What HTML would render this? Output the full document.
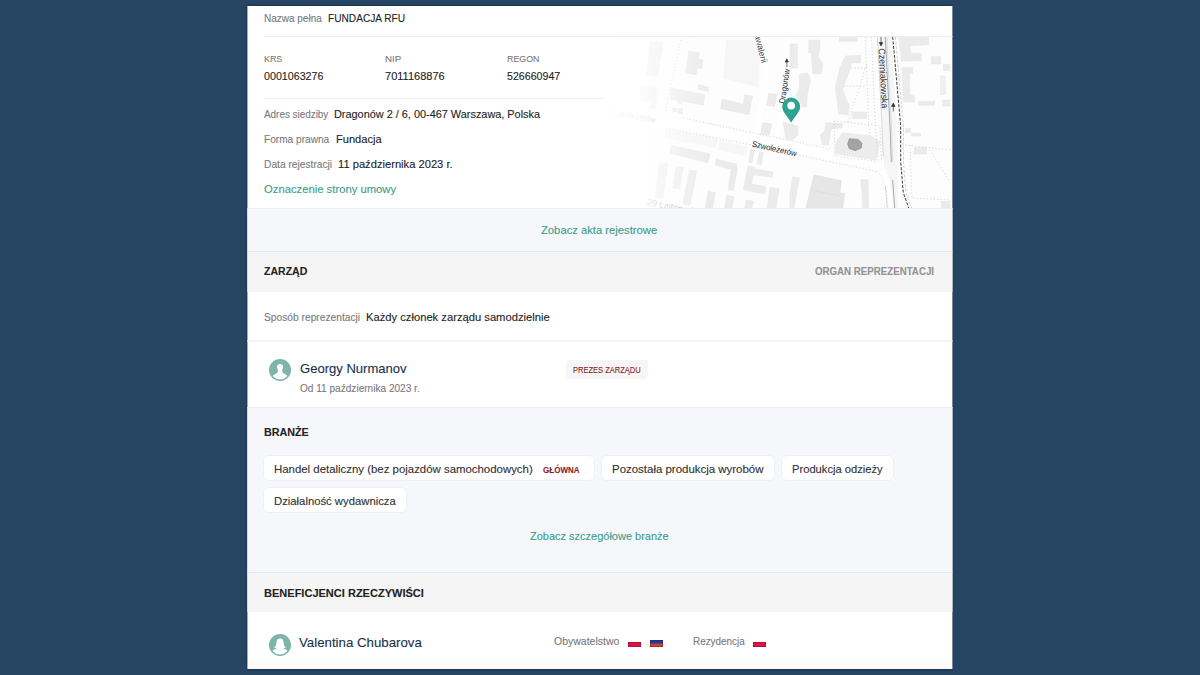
<!DOCTYPE html>
<html lang="pl"><head><meta charset="utf-8"><title>FUNDACJA RFU</title>
<style>
html,body{margin:0;padding:0}
body{width:1200px;height:675px;overflow:hidden;background:#264563;position:relative;font-family:"Liberation Sans",sans-serif}
.card{position:absolute;left:247px;top:6px;width:705px;height:663px;background:#fff;box-shadow:0 0 3px rgba(0,10,30,.55);overflow:hidden}
.abs{position:absolute}
.t{position:absolute;white-space:nowrap;line-height:1;transform-origin:0 0;-webkit-text-stroke:.1px currentColor}
.blue{background:#f5f7fa}
.hdr{background:#f5f5f5}
.chip{position:absolute;background:#fff;border:1px solid #eef0f3;border-radius:6px;box-sizing:border-box;height:26px;top:455px}
.fl{box-shadow:inset 0 0 0 .6px rgba(70,0,40,.45)}
.line{position:absolute;background:#ededed;height:1px}
</style></head><body>
<div class="abs" style="left:0;top:0;width:1200px;height:675px;transform:translateX(.4px)">
<div class="card"></div>
<!-- sections (page coords) -->
<div class="abs blue" style="left:247px;top:207.5px;width:705px;height:44px;border-top:1px solid #eceef0;border-bottom:1px solid #e6e8eb;box-sizing:border-box"></div>
<div class="abs hdr" style="left:247px;top:251.5px;width:705px;height:40.5px"></div>
<div class="abs" style="left:247px;top:340px;width:705px;height:2px;background:#f5f5f5"></div>
<div class="abs blue" style="left:247px;top:406.5px;width:705px;height:166.5px;border-top:1px solid #eceef0;border-bottom:1px solid #e6e8eb;box-sizing:border-box"></div>
<div class="abs hdr" style="left:247px;top:573px;width:705px;height:39px"></div>
<div class="line" style="left:264px;top:36px;width:688px"></div>
</div>
<svg class="abs" style="left:600px;top:37px" width="352" height="170.5" viewBox="600 37 352 170.5">
<defs>
<linearGradient id="fade" x1="0" y1="0" x2="1" y2="0"><stop offset="0" stop-color="#fff" stop-opacity="1"/><stop offset="0.4" stop-color="#fff" stop-opacity=".8"/><stop offset="1" stop-color="#fff" stop-opacity="0"/></linearGradient>
</defs>
<rect x="600" y="37" width="352" height="171" fill="#fdfdfd"/>
<!-- land-use areas -->
<g fill="#f6f6f6">
<polygon points="726,40 755.3,40 760.7,49.3 758,86.7 723.3,78.7"/>
<polygon points="666,128 718,139 716,148 664,138"/>
<polygon points="720,141 748,147 746,156 718,150"/>
</g>
<!-- roads (white bands) -->
<g fill="none" stroke="#fff" stroke-linecap="round">
<path d="M600,112 L700,129 L790,146 L878,164" stroke-width="10"/>
<path d="M757,37 C764,50 766,70 764,90 L756,140" stroke-width="6"/>
<path d="M789,37 L783,100 L776,142" stroke-width="5"/>
<path d="M884.5,37 L890,126 L893,208" stroke-width="17"/>
<path d="M884.6,37 L889.4,126 L891.5,208" stroke-width="14" stroke="#f6f6f6" stroke-linecap="butt"/>
<path d="M878,164 C884,172 888,185 889,208" stroke-width="8"/>
</g>
<!-- church grounds -->
<polygon points="842.7,134 870,136.7 878.7,142 875.3,158.7 836,152.7 837.3,143.3" fill="#ececec" stroke="#ececec" stroke-width="3" stroke-linejoin="round"/>
<!-- buildings -->
<g fill="#ebebeb" stroke="#e3e3e3" stroke-width=".4">
<polygon points="650,41.3 663.3,42.7 657.5,76 645.3,75.3 648,62"/>
<polygon points="688.7,51.3 699.3,52.7 698.7,59.3 702.7,60 702,68.7 697.3,68 696,74.7 685.3,72.7"/>
<polygon points="641.3,86 657.3,87.3 655.3,108.7 650,108 650.7,101.3 639.3,100"/>
<polygon points="671.3,88 704.7,94.7 703.3,105.3 682.7,101.3 681.3,104 676.7,103.3 677.3,100.7 670,99.3"/>
<polygon points="698.7,84.7 708.7,87.3 708,91.3 698,89.3"/>
<polygon points="722,99.3 743.3,104 744.7,94.7 752.7,96 748.7,114.7 720.7,108.7"/>
<rect x="672.7" y="108" width="4" height="4"/><rect x="678" y="108.7" width="4.7" height="5.3"/>
<polygon points="768.7,93.3 776.7,94 774.7,106.7 766.7,105.3"/>
<polygon points="762.7,122.7 772,124 769.3,135.3 760.7,134"/>
<polygon points="671.3,145.3 710,154 708,162.7 670,153.3"/>
<polygon points="660,163.3 668,164 662.7,198 654.7,197.3"/>
<polygon points="676,166.7 683.3,167.3 679.3,189.3 672.7,188"/>
<polygon points="689.3,170 696.7,171.3 690,205.3 682.7,204"/>
<polygon points="716,159.3 736.7,164 737.3,170 733.3,190.7 728,189.3 731.3,169.3 715.3,165.3"/>
<polygon points="748,166 754.7,167.3 754,168.7 773.3,172 772,177.3 753.3,174.7 751.3,184 766,186.7 764.7,194 750,191.3 743.3,189.3"/>
<polygon points="708,191.3 715.3,192.7 712.7,208 705.3,208"/>
<polygon points="726.7,195.3 734,196.7 732,208 724.7,208"/>
<polygon points="770,187.3 779.3,188.7 776,208 767.3,208"/>
<polygon points="746,200 753.3,201.3 752,208 744.7,208"/>
<polygon points="750.7,149.3 754.7,150 752,162.7 748.7,162"/>
<polygon points="759.3,152 763.3,152.7 761.3,164.7 757.3,164"/>
<rect x="790" y="44" width="7.3" height="24"/>
<polygon points="808.7,40 820,40 820,48 818,57.3 822.7,63.3 821.3,74 812.7,74 811.3,53.3 808.7,52.7"/>
<polygon points="799.3,74 808,73.3 810.7,80.7 807.3,94.7 806.7,106.7 802.7,107.3 796,94.7 799.3,89.3"/>
<polygon points="845.3,56 860.7,55.3 860.7,62.7 851.3,63.3 849.3,72 846,80 842.7,89.3 846,98.7 849.3,105.3 848.7,114.7 838.7,114 835.3,86.7 840,67.3"/>
<rect x="839.3" y="37.3" width="18" height="4"/>
<rect x="852" y="112" width="14.7" height="6.7"/>
<polygon points="783,122 798,126 798,135.3 792.7,140 786,139"/>
<polygon points="825.3,122.7 842.7,123.3 842,128 831.3,128.7 830,135.3 828.7,144.7 822.7,145.3 820,135.3 824.7,130.7"/>
<polygon points="898.7,37.3 928.7,37.3 928.7,44.7 910,46 910.7,52.7 921.3,53.3 921.3,60.7 901.3,61.3"/>
<polygon points="902,67.3 912.7,67.3 912.7,73.3 909.3,74 910,95.3 914.7,96 914.7,102 903.3,102"/>
<rect x="931.3" y="56.7" width="9.4" height="7.3"/>
<rect x="943.3" y="64.7" width="6.7" height="6"/>
<rect x="940.7" y="76" width="4.6" height="18.7" fill="#f0f0f0"/>
<rect x="918.7" y="101.3" width="16" height="4"/>
<rect x="942.7" y="100" width="7.3" height="6"/>
<rect x="914" y="147.3" width="12.7" height="6.7"/>
<rect x="905.3" y="128.7" width="5.4" height="4"/><rect x="911.3" y="133.3" width="9.4" height="2.7"/>
<rect x="941.3" y="201.3" width="8.7" height="6.7"/>
<polygon points="814,174.7 841.3,180.7 840,192.7 844.7,193.3 842.7,208 806,208" fill="#e6e6e6" stroke="#d9d9d9"/>
<polygon points="792.7,176.7 799.3,178 794,208 790,208 790,192.7"/>
<polygon points="860.7,179.3 868,180 868.7,208 862.7,208 862,192.7"/>
</g>
<line x1="811" y1="190" x2="840" y2="196" stroke="#d9d9d9" stroke-width=".5"/>
<!-- church -->
<polygon points="849.3,138.7 858,139.3 862,143.3 861.3,148 855.3,150.7 849.3,148.7 847.6,144" fill="#a3a3a3" stroke="#8a8a8a" stroke-width=".6"/>
<!-- dotted paths -->
<g fill="none" stroke="#c4c4c4" stroke-width=".7" stroke-dasharray="1.2 2.2">
<path d="M680.7,40 L665.3,112"/>
<path d="M683,118 L770,136.5 L830,149"/>
<path d="M666,128 L752,145 L878,172 C884,178 887,190 888,208"/>
<path d="M865.3,37 L868.7,126 L870,136"/>
<path d="M871.5,37 L875.5,126 L878,160"/>
<path d="M834,121 L880,126 L881.5,162 L835,156 Z"/>
<path d="M851,68 L866,68 M843,86 L866,86 M866,66 L848,122"/>
<path d="M905,145 L950,150 M910,145 L912,198 L950,200 M930,150 L950,182"/>
</g>
<!-- Czerniakowska lines -->
<g fill="none">
<path d="M877.3,37 L882,126 L883.3,156.7" stroke="#cfcfcf" stroke-width=".8"/>
<path d="M885.3,186 L887.3,208" stroke="#cfcfcf" stroke-width=".8"/>
<path d="M885.2,37 L890,126 L891.3,162" stroke="#a8a8a8" stroke-width="1"/>
<path d="M886.6,37 L891.4,126 L892.7,162" stroke="#d4d4d4" stroke-width=".8"/>
<path d="M892.7,180 L894.7,208" stroke="#a8a8a8" stroke-width="1"/>
<path d="M892.7,37 L900.7,126 L900.7,162 L903.3,192.7 L908.7,208" stroke="#3a3a3a" stroke-width="1" stroke-dasharray="3 1.5"/>
<path d="M895.4,37 L903.4,126 L903.4,162 L906,192.7 L911.4,208" stroke="#bdbdbd" stroke-width=".7" stroke-dasharray="3 1.6"/>
</g>
<!-- arrows -->
<g stroke="#333" stroke-width=".7" fill="#333">
<path d="M881,37 L881,44" fill="none"/><path d="M879.3,42.5 L882.7,42.5 L881,46 Z"/>
<path d="M893.3,104.5 L893.3,111.5" fill="none"/><path d="M891.6,106.5 L895,106.5 L893.3,103 Z"/>
<path d="M786.8,60.5 L787,67" fill="none"/><path d="M785.2,62 L788.4,62 L786.8,58.8 Z"/>
</g>
<!-- labels -->
<g font-family="Liberation Sans, sans-serif" fill="#2b2b2b" font-size="9">
<text transform="translate(878.6,48.5) rotate(87)" font-size="9.4" textLength="60" lengthAdjust="spacingAndGlyphs">Czerniakowska</text>
<text transform="translate(784.8,103.8) rotate(-81.7)" font-size="8.4" textLength="35" lengthAdjust="spacingAndGlyphs">Dragonów</text>
<text transform="translate(751.5,146.5) rotate(12.5)" font-size="8.5" textLength="45.5" lengthAdjust="spacingAndGlyphs">Szwoleżerów</text>
<text transform="translate(753.5,31) rotate(76)" font-size="8.6" fill="#444">kawalerii</text>
<text transform="translate(611,114.5) rotate(11)" font-size="9" fill="#bbb" textLength="45" lengthAdjust="spacingAndGlyphs">Szwoleżerów</text>
<text transform="translate(646.5,205) rotate(11)" font-size="9" fill="#aaa">29 Listopada</text>
</g>
<!-- fade -->
<rect x="600" y="37" width="110" height="171" fill="url(#fade)"/>
<!-- pin -->
<path d="M791.2,122.8 C788.5,117.5 782.2,112.5 782.2,106.6 A9,9 0 1 1 800.2,106.6 C800.2,112.5 793.9,117.5 791.2,122.8 Z" fill="#2fa392"/>
<circle cx="791.2" cy="105.6" r="3.9" fill="#fff"/>
</svg>

<div class="line" style="left:264px;top:98px;width:339px"></div>
<!-- chips -->
<div class="chip" style="left:263px;width:332px"></div>
<div class="chip" style="left:601px;width:173.5px"></div>
<div class="chip" style="left:780.5px;width:113.5px"></div>
<div class="chip" style="left:263px;width:144px;top:487px"></div>
<!-- badge -->
<div class="abs" style="left:565.5px;top:360px;width:82.5px;height:18.5px;background:#f6f6f6;border-radius:4px"></div>
<svg class="abs" style="left:268.7px;top:359.4px" width="22.1" height="22.1" viewBox="0 0 24 24"><defs><clipPath id="c1"><circle cx="12" cy="12" r="10.2"/></clipPath></defs><circle cx="12" cy="12" r="12" fill="#7fb5a8"/><g clip-path="url(#c1)" fill="#fff"><circle cx="12" cy="8.8" r="3.35"/><path d="M9.6,11 L9.6,14.4 C8.4,15.8 5,16.8 3.4,19 L3.4,24 L20.6,24 L20.6,19 C19,16.8 15.6,15.8 14.4,14.4 L14.4,11 Z"/></g></svg>
<svg class="abs" style="left:268.7px;top:633.8px" width="22.1" height="22.1" viewBox="0 0 24 24"><defs><clipPath id="c2"><circle cx="12" cy="12" r="10.2"/></clipPath></defs><circle cx="12" cy="12" r="12" fill="#7fb5a8"/><g clip-path="url(#c2)" fill="#fff"><path d="M12,5 C14.5,5 15.6,6.8 15.8,9 C16,12 16.8,13.8 18.5,14.9 L15.3,15.6 C17,16.5 19.5,17.2 20.6,19 L20.6,24 L3.4,24 L3.4,19 C4.5,17.2 7,16.5 8.7,15.6 L5.5,14.9 C7.2,13.8 8,12 8.2,9 C8.4,6.8 9.5,5 12,5 Z"/></g></svg>
<!-- flags -->
<div class="abs fl" style="left:628px;top:641.8px;width:13px;height:5px;background:#dc1446"></div>
<div class="abs fl" style="left:650px;top:640px;width:13px;height:6.8px;background:linear-gradient(#1a3c96 0,#1f3d96 42%,#c8402f 58%,#c8402f 100%)"></div>
<div class="abs fl" style="left:752.6px;top:641.8px;width:13px;height:5px;background:#dc1446"></div>
<div class="abs" style="left:247.4px;top:656px;width:705px;height:13px;background:linear-gradient(rgba(0,0,0,0),rgba(0,0,0,.025))"></div>

<span class="t" style="left:263.80px;top:13.94px;font-size:10.0px;font-weight:400;color:#7a7a7a;transform:scaleX(0.9991)">Nazwa pełna</span>
<span class="t" style="left:328.00px;top:13.34px;font-size:10.7px;font-weight:400;color:#222;transform:scaleX(0.9481)">FUNDACJA RFU</span>
<span class="t" style="left:263.80px;top:54.37px;font-size:9.6px;font-weight:400;color:#7a7a7a;transform:scaleX(0.9262)">KRS</span>
<span class="t" style="left:263.80px;top:70.84px;font-size:10.7px;font-weight:400;color:#222;transform:scaleX(1.0001)">0001063276</span>
<span class="t" style="left:385.00px;top:54.37px;font-size:9.6px;font-weight:400;color:#7a7a7a;transform:scaleX(1.0132)">NIP</span>
<span class="t" style="left:385.00px;top:70.84px;font-size:10.7px;font-weight:400;color:#222;transform:scaleX(1.0310)">7011168876</span>
<span class="t" style="left:506.70px;top:54.37px;font-size:9.6px;font-weight:400;color:#7a7a7a;transform:scaleX(0.9219)">REGON</span>
<span class="t" style="left:506.70px;top:70.84px;font-size:10.7px;font-weight:400;color:#222;transform:scaleX(0.9953)">526660947</span>
<span class="t" style="left:263.90px;top:110.03px;font-size:10.0px;font-weight:400;color:#7a7a7a;transform:scaleX(0.9888)">Adres siedziby</span>
<span class="t" style="left:334.40px;top:109.44px;font-size:10.7px;font-weight:400;color:#222;transform:scaleX(1.0192)">Dragonów 2 / 6, 00-467 Warszawa, Polska</span>
<span class="t" style="left:263.90px;top:134.94px;font-size:10.0px;font-weight:400;color:#7a7a7a;transform:scaleX(1.0122)">Forma prawna</span>
<span class="t" style="left:335.90px;top:134.34px;font-size:10.7px;font-weight:400;color:#222;transform:scaleX(1.0381)">Fundacja</span>
<span class="t" style="left:263.90px;top:159.83px;font-size:10.0px;font-weight:400;color:#7a7a7a;transform:scaleX(1.0215)">Data rejestracji</span>
<span class="t" style="left:338.00px;top:159.24px;font-size:10.7px;font-weight:400;color:#222;transform:scaleX(1.0446)">11 października 2023 r.</span>
<span class="t" style="left:263.90px;top:184.34px;font-size:10.7px;font-weight:400;color:#3b9c8b;transform:scaleX(1.0541)">Oznaczenie strony umowy</span>
<span class="t" style="left:541.20px;top:225.24px;font-size:10.7px;font-weight:400;color:#3b9c8b;transform:scaleX(1.0521)">Zobacz akta rejestrowe</span>
<span class="t" style="left:263.80px;top:265.91px;font-size:11.8px;font-weight:700;color:#222;transform:scaleX(0.8924)">ZARZĄD</span>
<span class="t" style="left:815.30px;top:266.54px;font-size:10.0px;font-weight:700;color:#929292;transform:scaleX(0.9705)">ORGAN REPREZENTACJI</span>
<span class="t" style="left:263.90px;top:312.74px;font-size:10.0px;font-weight:400;color:#7a7a7a;transform:scaleX(1.0232)">Sposób reprezentacji</span>
<span class="t" style="left:365.60px;top:312.14px;font-size:10.7px;font-weight:400;color:#222;transform:scaleX(1.0479)">Każdy członek zarządu samodzielnie</span>
<span class="t" style="left:299.70px;top:362.93px;font-size:12.6px;font-weight:400;color:#17324d;transform:scaleX(1.0358)">Georgy Nurmanov</span>
<span class="t" style="left:299.70px;top:383.97px;font-size:10.2px;font-weight:400;color:#7a7a7a;transform:scaleX(0.9894)">Od 11 października 2023 r.</span>
<span class="t" style="left:572.80px;top:366.34px;font-size:8.7px;font-weight:400;color:#8a1c25;transform:scaleX(0.8662)">PREZES ZARZĄDU</span>
<span class="t" style="left:263.90px;top:426.91px;font-size:11.8px;font-weight:700;color:#222;transform:scaleX(0.9111)">BRANŻE</span>
<span class="t" style="left:274.10px;top:464.34px;font-size:10.7px;font-weight:400;color:#303030;transform:scaleX(1.0673)">Handel detaliczny (bez pojazdów samochodowych)</span>
<span class="t" style="left:542.80px;top:465.82px;font-size:8.6px;font-weight:700;color:#8a1c25;transform:scaleX(0.9349)">GŁÓWNA</span>
<span class="t" style="left:612.00px;top:464.34px;font-size:10.7px;font-weight:400;color:#303030;transform:scaleX(1.0715)">Pozostała produkcja wyrobów</span>
<span class="t" style="left:791.70px;top:464.34px;font-size:10.7px;font-weight:400;color:#303030;transform:scaleX(1.0448)">Produkcja odzieży</span>
<span class="t" style="left:274.10px;top:496.14px;font-size:10.7px;font-weight:400;color:#303030;transform:scaleX(1.0565)">Działalność wydawnicza</span>
<span class="t" style="left:530.00px;top:530.74px;font-size:10.7px;font-weight:400;color:#3b9c8b;transform:scaleX(1.0281)">Zobacz szczegółowe branże</span>
<span class="t" style="left:264.20px;top:587.71px;font-size:11.8px;font-weight:700;color:#222;transform:scaleX(0.9345)">BENEFICJENCI RZECZYWIŚCI</span>
<span class="t" style="left:299.20px;top:637.23px;font-size:12.6px;font-weight:400;color:#17324d;transform:scaleX(1.0524)">Valentina Chubarova</span>
<span class="t" style="left:554.00px;top:637.13px;font-size:10.0px;font-weight:400;color:#7a7a7a;transform:scaleX(1.0497)">Obywatelstwo</span>
<span class="t" style="left:692.50px;top:637.13px;font-size:10.0px;font-weight:400;color:#7a7a7a;transform:scaleX(0.9888)">Rezydencja</span>
</body></html>
